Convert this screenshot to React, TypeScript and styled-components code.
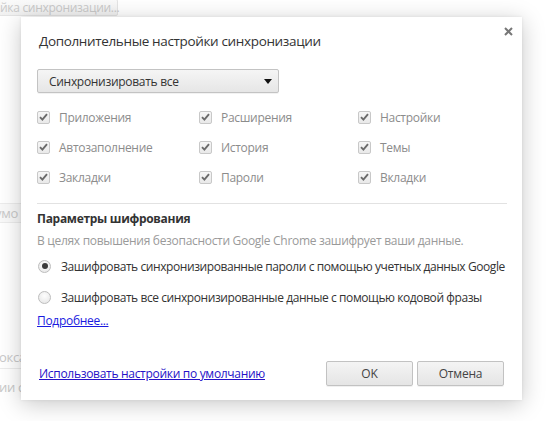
import React from 'react';
import styled, { createGlobalStyle } from 'styled-components';

const GlobalStyle = createGlobalStyle`
  html, body {
    margin: 0;
    padding: 0;
    background: #fff;
    font-family: 'Open Sans', 'Noto Sans', 'Liberation Sans', sans-serif;
  }
`;

const Page = styled.div`
  position: relative;
  width: 546px;
  height: 421px;
  overflow: hidden;
  background: #fff;
`;

// faded settings page behind the overlay
const Backdrop = styled.div`
  display: flex;
  flex-direction: column;
  align-items: flex-start;
  color: #c9c9c9;
  font-size: 12px;
  letter-spacing: -0.3px;
`;

const BgButton = styled.div`
  height: 17px;
  width: 122px;
  margin-left: -4px;
  margin-top: -1px;
  box-sizing: border-box;
  border: 1px solid #e4e4e4;
  border-radius: 2px;
  background: linear-gradient(#fafafa, #f1f1f1);
  line-height: 15px;
  padding-left: 3px;
  white-space: nowrap;
`;

const BgInput = styled.div`
  margin-top: 187px;
  margin-left: -6px;
  width: 40px;
  height: 20px;
  box-sizing: border-box;
  border: 1px solid #ececec;
  background: #f9f9f9;
  line-height: 18px;
  font-size: 13px;
  white-space: nowrap;
`;

const BgText = styled.div<{ $top: number }>`
  margin-top: ${(p) => p.$top}px;
  margin-left: -1px;
  font-size: 13px;
  line-height: 16px;
  white-space: nowrap;
`;

const BgRule = styled.div`
  margin-top: 3px;
  width: 30px;
  height: 1px;
  background: #ececec;
`;

const Dialog = styled.div`
  position: absolute;
  left: 21px;
  top: 17px;
  width: 501px;
  height: 383px;
  box-sizing: border-box;
  padding: 0 15px 14px 16px;
  background: #fff;
  box-shadow: 0 4px 22px rgba(0, 0, 0, 0.22), 0 0 3px rgba(0, 0, 0, 0.08);
  display: flex;
  flex-direction: column;
  color: #333;
  letter-spacing: -0.3px;
`;

const Header = styled.div`
  display: flex;
  justify-content: space-between;
  align-items: flex-start;
  padding-top: 14px;
`;

const Title = styled.h1`
  margin: 0 0 0 2px;
  font-size: 13.5px;
  font-weight: normal;
  letter-spacing: -0.35px;
  line-height: 20px;
  color: #333;
`;

const Close = styled.div`
  margin: -7px -8px 0 0;
  width: 14px;
  height: 14px;
  display: flex;
  align-items: center;
  justify-content: center;
`;

const Select = styled.div`
  margin-top: 18px;
  width: 242px;
  height: 24px;
  box-sizing: border-box;
  border: 1px solid #c3c3c3;
  border-radius: 2px;
  background: linear-gradient(#f5f5f5, #e6e6e6);
  box-shadow: 0 1px 0 rgba(0, 0, 0, 0.05);
  display: flex;
  align-items: center;
  justify-content: space-between;
  padding: 0 6px 0 11px;
  font-size: 12px;
  color: #333;
`;

const Arrow = styled.div`
  width: 0;
  height: 0;
  border-left: 4px solid transparent;
  border-right: 4px solid transparent;
  border-top: 5px solid #111;
`;

const Grid = styled.div`
  margin-top: 14px;
  display: grid;
  grid-template-columns: 162px 159px 1fr;
  grid-auto-rows: 20px;
  row-gap: 10px;
`;

const CheckItem = styled.label`
  display: flex;
  align-items: center;
  gap: 9px;
  font-size: 12px;
  color: #8c8c8c;
`;

const Box = styled.span`
  flex-shrink: 0;
  width: 13px;
  height: 13px;
  box-sizing: border-box;
  border: 1px solid #c8c8c8;
  border-radius: 2px;
  background: linear-gradient(#f6f6f6, #e9e9e9);
  display: flex;
  align-items: center;
  justify-content: center;
`;

const Rule = styled.div`
  margin-top: 16px;
  height: 1px;
  background: #e2e2e2;
`;

const Heading = styled.div`
  margin-top: 6px;
  font-size: 12px;
  font-weight: bold;
  line-height: 18px;
  color: #333;
`;

const Desc = styled.div`
  margin-top: 4px;
  font-size: 12px;
  line-height: 18px;
  color: #9a9a9a;
`;

const RadioRow = styled.label<{ $gap: number }>`
  margin-top: ${(p) => p.$gap}px;
  display: flex;
  align-items: center;
  gap: 10px;
  height: 20px;
  font-size: 12px;
  letter-spacing: -0.42px;
  color: #333;
  white-space: nowrap;
`;

const Radio = styled.span<{ $on?: boolean }>`
  flex-shrink: 0;
  width: 13px;
  height: 13px;
  margin-left: 1px;
  box-sizing: border-box;
  border-radius: 50%;
  border: 1px solid #bdbdbd;
  background: radial-gradient(circle at 50% 35%, #fdfdfd, #e4e4e4);
  display: flex;
  align-items: center;
  justify-content: center;
  &::after {
    content: '';
    display: ${(p) => (p.$on ? 'block' : 'none')};
    width: 6px;
    height: 6px;
    border-radius: 50%;
    background: #3a3a3a;
  }
`;

const Link = styled.a<{ $color: string }>`
  color: ${(p) => p.$color};
  text-decoration: underline;
  font-size: 12px;
  cursor: pointer;
`;

const MoreLine = styled.div`
  margin-top: 4px;
  line-height: 16px;
`;

const Footer = styled.div`
  margin-top: auto;
  margin-right: 3px;
  display: flex;
  align-items: center;
  gap: 4px;
  padding-left: 2px;
  & > :first-child {
    margin-right: auto;
  }
`;

const Button = styled.button`
  width: 87px;
  height: 25px;
  box-sizing: border-box;
  border: 1px solid #c2c2c2;
  border-radius: 2px;
  background: linear-gradient(#f4f4f4, #e5e5e5);
  box-shadow: 0 1px 0 rgba(0, 0, 0, 0.06);
  font-family: inherit;
  font-size: 12px;
  letter-spacing: -0.2px;
  color: #444;
  padding: 0;
`;

const items = [
  'Приложения',
  'Расширения',
  'Настройки',
  'Автозаполнение',
  'История',
  'Темы',
  'Закладки',
  'Пароли',
  'Вкладки',
];

const Check = () => (
  <Box>
    <svg width="9" height="8" viewBox="0 0 9 8">
      <path d="M1 4.2 L3.4 6.6 L8 1.2" fill="none" stroke="#6a6a6a" strokeWidth="1.9" />
    </svg>
  </Box>
);

export default function App() {
  return (
    <Page>
      <GlobalStyle />
      <Backdrop>
        <BgButton>йка синхронизации...</BgButton>
        <BgInput>умо</BgInput>
        <BgText $top={126}>окса</BgText>
        <BgRule />
        <BgText $top={10}>ии св</BgText>
      </Backdrop>

      <Dialog>
        <Header>
          <Title>Дополнительные настройки синхронизации</Title>
          <Close>
            <svg width="9" height="9" viewBox="0 0 9 9">
              <path d="M1 1 L8 8 M8 1 L1 8" stroke="#777" strokeWidth="2" />
            </svg>
          </Close>
        </Header>

        <Select>
          Синхронизировать все
          <Arrow />
        </Select>

        <Grid>
          {items.map((name) => (
            <CheckItem key={name}>
              <Check />
              {name}
            </CheckItem>
          ))}
        </Grid>

        <Rule />
        <Heading>Параметры шифрования</Heading>
        <Desc>В целях повышения безопасности Google Chrome зашифрует ваши данные.</Desc>

        <RadioRow $gap={6}>
          <Radio $on />
          Зашифровать синхронизированные пароли с помощью учетных данных Google
        </RadioRow>
        <RadioRow $gap={11}>
          <Radio />
          Зашифровать все синхронизированные данные с помощью кодовой фразы
        </RadioRow>
        <MoreLine>
          <Link $color="#1a1adf">Подробнее...</Link>
        </MoreLine>

        <Footer>
          <Link $color="#2611c8">Использовать настройки по умолчанию</Link>
          <Button>OK</Button>
          <Button>Отмена</Button>
        </Footer>
      </Dialog>
    </Page>
  );
}
